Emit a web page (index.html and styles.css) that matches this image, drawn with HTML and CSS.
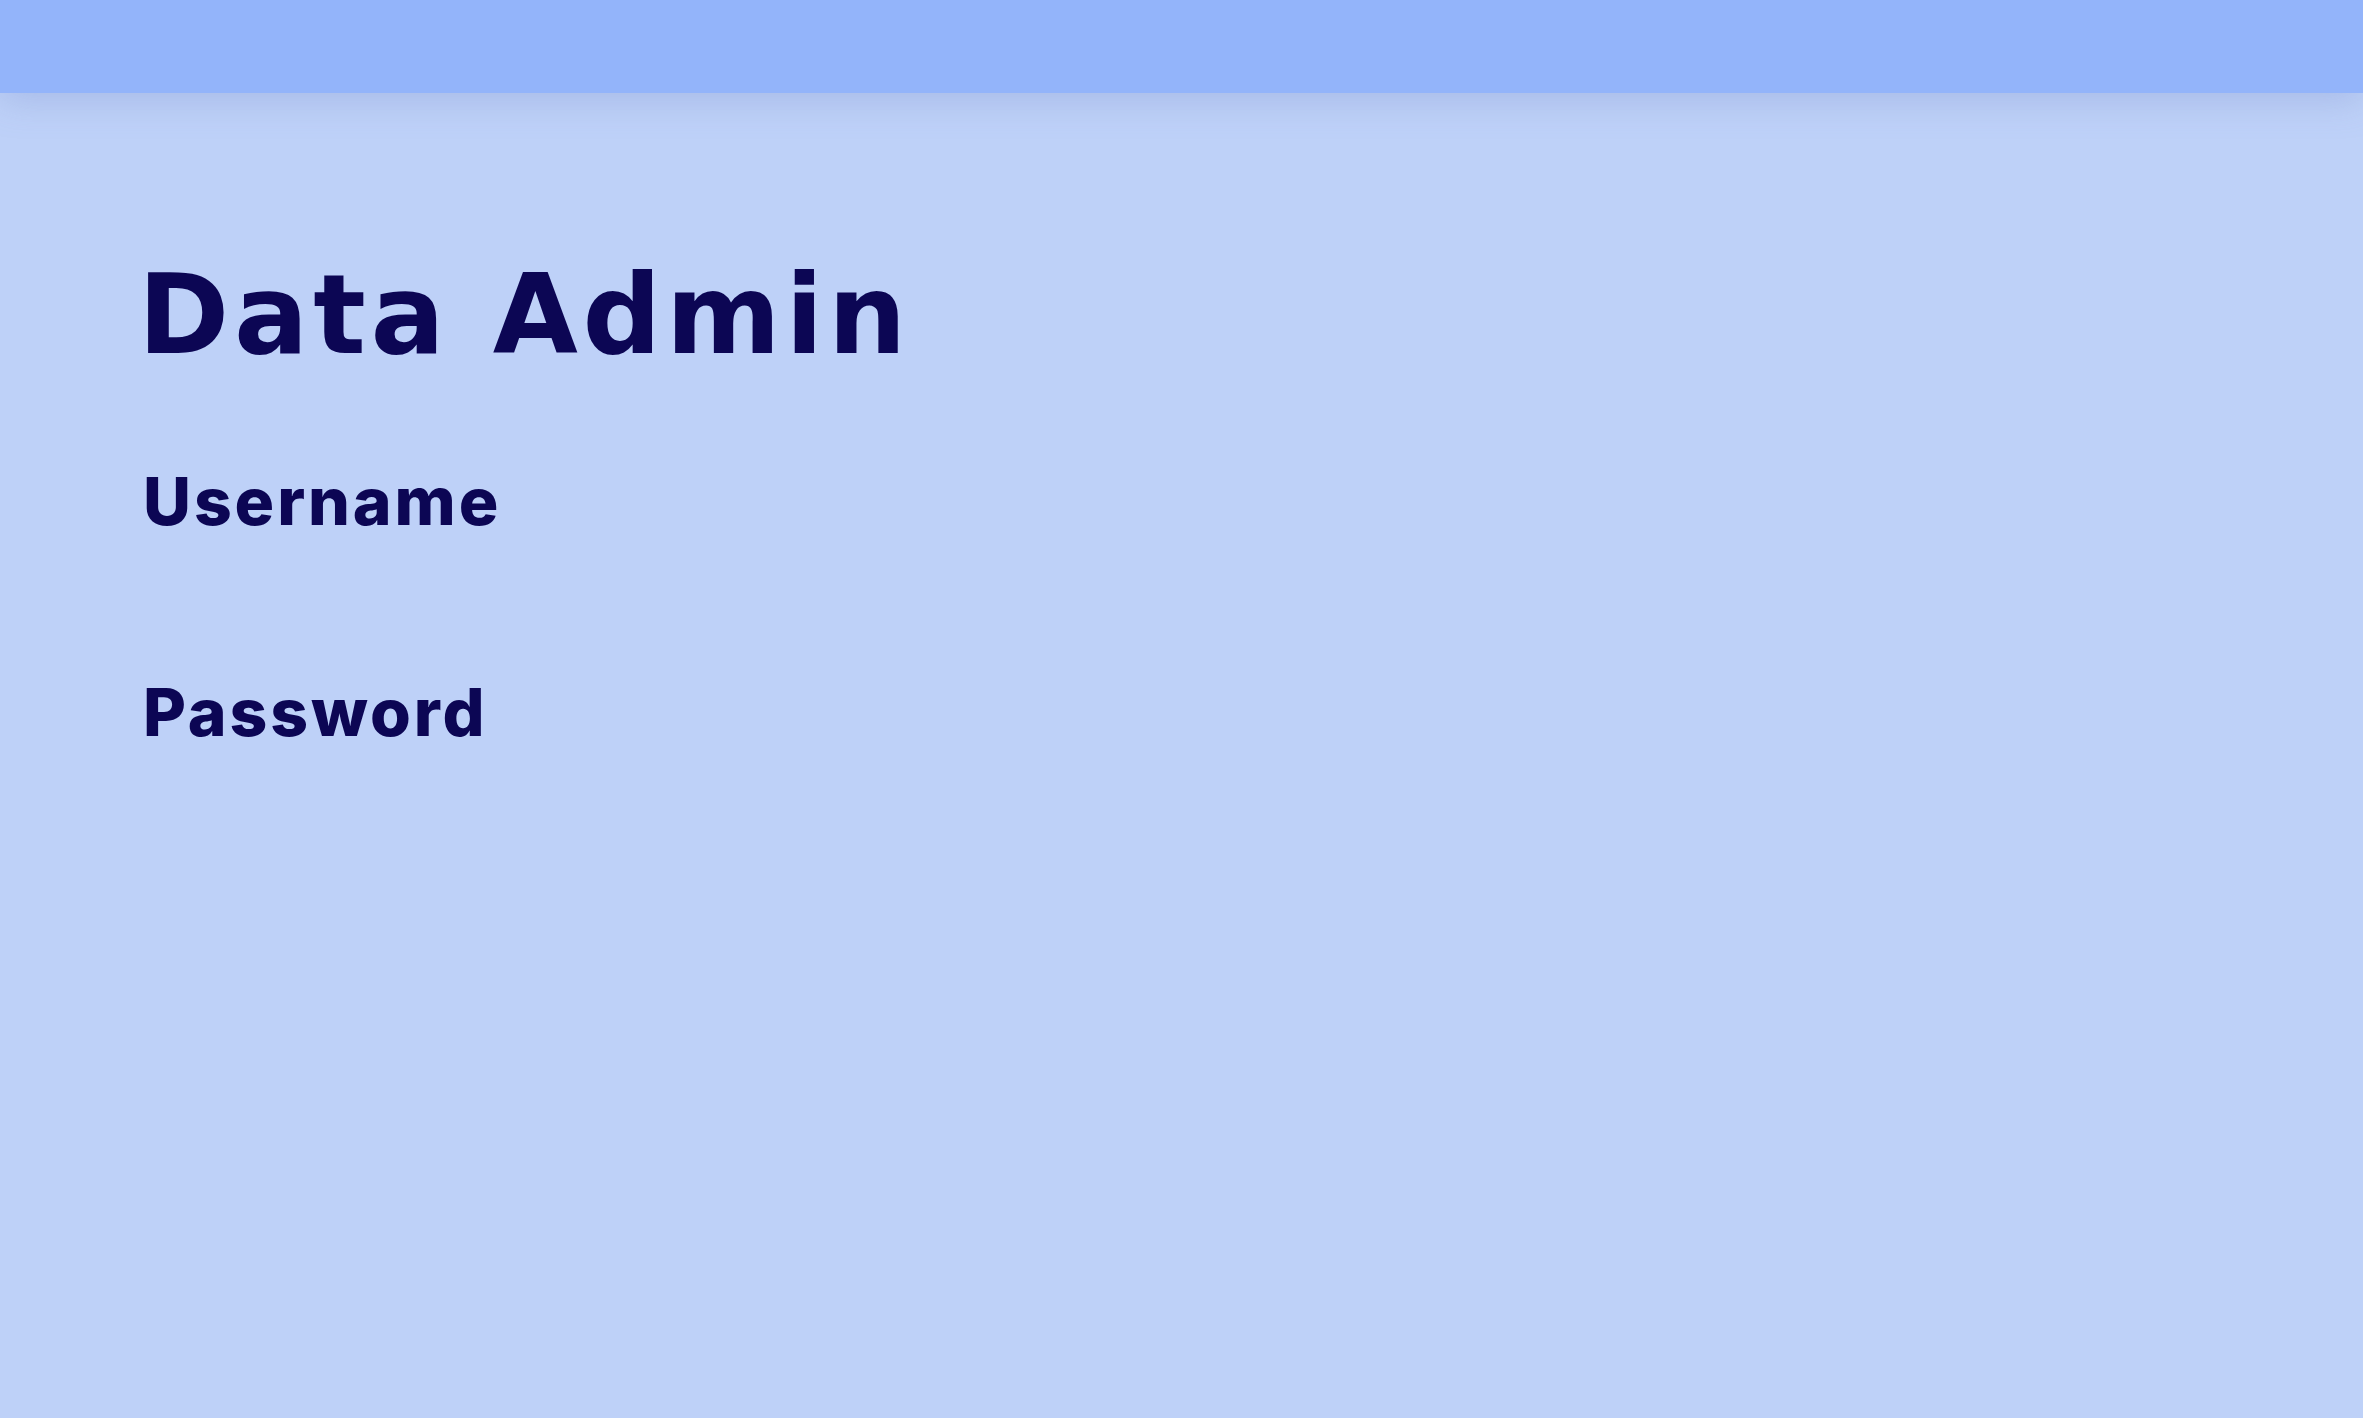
FILE: index.html
```html
<!DOCTYPE html>
<html lang="en">
<head>
<meta charset="utf-8">
<title>Data Admin</title>
<link rel="stylesheet" href="styles.css">
</head>
<body>
<header class="topbar"></header>
<main class="login">
  <h1 class="title">Data Admin</h1>
  <form class="form">
    <label class="field-label">Username</label>
    <label class="field-label">Password</label>
  </form>
</main>
</body>
</html>
```
FILE: styles.css
```css
html, body {
  margin: 0;
  padding: 0;
  height: 100%;
}
body {
  background: #bed1f8;
  color: #0c0654;
  font-family: Inter, "Noto Sans", sans-serif;
  overflow: hidden;
}
.topbar {
  height: 93px;
  background: #93b4fa;
  box-shadow: 0 6px 36px rgba(120, 140, 200, 0.35);
  position: relative;
  z-index: 1;
}
.login {
  padding: 167px 0 0 143px;
}
.title {
  margin: 0 0 0 -5px;
  font-family: "DejaVu Sans", Inter, sans-serif;
  font-size: 110px;
  line-height: 1;
  font-weight: 700;
  letter-spacing: 4.8px;
}
.form {
  display: flex;
  flex-direction: column;
  align-items: flex-start;
  gap: 145px;
  margin-top: 98px;
}
.field-label {
  font-size: 66px;
  line-height: 1;
  font-weight: 800;
  letter-spacing: 2.9px;
}
```
